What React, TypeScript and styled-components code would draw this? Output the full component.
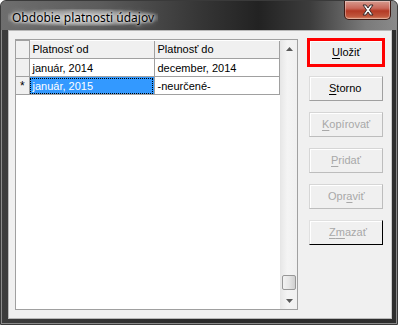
import styled, { createGlobalStyle } from "styled-components";

const GlobalStyle = createGlobalStyle`
  html, body {
    margin: 0;
    padding: 0;
    background: #ffffff;
  }
  * {
    box-sizing: border-box;
  }
`;

const Window = styled.div`
  width: 398px;
  height: 325px;
  display: flex;
  flex-direction: column;
  border: 1px solid #3a3a3a;
  border-radius: 6px 6px 0 0;
  background: linear-gradient(
    90deg,
    #3c3c3c 0%,
    #2a2a2a 50%,
    #2e2e2e 100%
  );
  box-shadow: inset 0 0 0 1px #8a8a8a;
  overflow: hidden;
`;

const TitleBar = styled.div`
  height: 29px;
  flex: none;
  display: flex;
  justify-content: space-between;
  align-items: flex-start;
  padding: 0 6px 0 7px;
  background: linear-gradient(
    90deg,
    #6e6e6e 0%,
    #5c5c5c 25%,
    #363636 50%,
    #222222 65%,
    #3c3c3c 78%,
    #7a7a7a 92%,
    #8a8a8a 100%
  );
`;

const Title = styled.div`
  margin-top: 8px;
  font-family: "Noto Sans", "Open Sans", sans-serif;
  font-size: 12px;
  color: #000;
  padding: 0 4px;
  background: radial-gradient(
    ellipse at center,
    rgba(255, 255, 255, 0.6) 0%,
    rgba(255, 255, 255, 0.35) 55%,
    rgba(255, 255, 255, 0) 80%
  );
  text-shadow: 0 0 6px #fff, 0 0 3px #fff;
`;

const CloseButton = styled.div`
  width: 47px;
  height: 19px;
  display: flex;
  align-items: center;
  justify-content: center;
  border: 1px solid #3d1a14;
  border-top: none;
  border-radius: 0 0 5px 5px;
  background: linear-gradient(
    180deg,
    #d69a8e 0%,
    #c9685a 40%,
    #b43a25 55%,
    #c0563c 85%,
    #d98a6a 100%
  );
  box-shadow: inset 0 0 0 1px rgba(255, 255, 255, 0.35);
`;

const Body = styled.div`
  flex: 1;
  display: flex;
  padding: 0 7px 7px 7px;
`;

const Client = styled.div`
  flex: 1;
  display: flex;
  gap: 11px;
  padding: 8px 8px 8px 6px;
  background: #f0f0f0;
  border: 1px solid #b8b8b8;
  border-right-color: #c8c8c8;
  font-family: "Liberation Sans", Arial, sans-serif;
  font-size: 11px;
  color: #000;
`;

const Grid = styled.div`
  width: 283px;
  height: 271px;
  display: flex;
  border: 1px solid #a0a0a0;
  background: #fff;
`;

const TableArea = styled.div`
  flex: 1;
  background: #fff;
`;

const Table = styled.table`
  border-collapse: collapse;
  font: inherit;
`;

const HeadCell = styled.th<{ $w: number }>`
  width: ${(p) => p.$w}px;
  height: 17px;
  padding: 0 3px;
  text-align: left;
  font-weight: normal;
  background: #f0f0f0;
  border: 1px solid #a0a0a0;
  border-top: none;
  white-space: nowrap;
`;

const RowHead = styled.td`
  width: 13px;
  height: 18px;
  padding: 0;
  text-align: center;
  font-weight: normal;
  background: #f0f0f0;
  border: 1px solid #a0a0a0;
  border-left: none;
  font-size: 12px;
`;

const Cell = styled.td<{ $selected?: boolean }>`
  height: 18px;
  padding: 0 3px;
  border: 1px solid #a0a0a0;
  white-space: nowrap;
  background: ${(p) => (p.$selected ? "#3399ff" : "#fff")};
  color: ${(p) => (p.$selected ? "#fff" : "#000")};
  outline: ${(p) => (p.$selected ? "1px dotted #000" : "none")};
  outline-offset: -2px;
`;

const ScrollBar = styled.div`
  width: 17px;
  flex: none;
  display: flex;
  flex-direction: column;
  border-left: 1px solid #e6e6e6;
  background: linear-gradient(90deg, #e8e8e8 0%, #f4f4f4 40%, #f0f0f0 100%);
`;

const Arrow = styled.div`
  height: 17px;
  display: flex;
  align-items: center;
  justify-content: center;
  flex: none;
`;

const Track = styled.div`
  flex: 1;
  display: flex;
  flex-direction: column;
  justify-content: flex-end;
  padding: 0 1px 2px 1px;
`;

const Thumb = styled.div`
  height: 15px;
  border: 1px solid #979797;
  border-radius: 2px;
  background: linear-gradient(90deg, #f2f2f2 0%, #e6e6e6 50%, #cfcfcf 100%);
`;

const Buttons = styled.div`
  display: flex;
  flex-direction: column;
  gap: 11px;
  padding-top: 1px;
`;

const Button = styled.div<{
  $indent: number;
  $disabled?: boolean;
  $focused?: boolean;
  $raised?: boolean;
}>`
  width: 74px;
  height: 25px;
  display: flex;
  align-items: center;
  padding-left: ${(p) => p.$indent}px;
  background: #f0f0f0;
  color: ${(p) => (p.$disabled ? "#a8a8a8" : "#000")};
  border: 1px solid;
  border-color: ${(p) =>
    p.$focused
      ? "#000"
      : p.$raised
      ? "#e0e0e0 #000 #000 #e0e0e0"
      : p.$disabled
      ? "#d6d6d6 #bdbdbd #bdbdbd #d6d6d6"
      : "#dcdcdc #a0a0a0 #a0a0a0 #dcdcdc"};
  box-shadow: inset 1px 1px 0 #fff;
  outline: ${(p) => (p.$focused ? "3px solid #ff0000" : "none")};
  outline-offset: -1px;
`;

const Label = styled.span`
  font-weight: 400;
  line-height: 13px;
  white-space: nowrap;
  u {
    text-decoration: underline;
    text-underline-offset: 2px;
  }
`;

export default function App() {
  return (
    <>
      <GlobalStyle />
      <Window>
        <TitleBar>
          <Title>Obdobie platnosti údajov</Title>
          <CloseButton>
            <svg width="14" height="12" viewBox="0 0 14 12">
              <path
                d="M2 1 L5 1 L7 4 L9 1 L12 1 L8.5 6 L12 11 L9 11 L7 8 L5 11 L2 11 L5.5 6 Z"
                fill="#f4f4f4"
                stroke="#3a2a2a"
                strokeWidth="1"
                strokeLinejoin="round"
              />
            </svg>
          </CloseButton>
        </TitleBar>
        <Body>
          <Client>
            <Grid>
              <TableArea>
                <Table>
                  <thead>
                    <tr>
                      <RowHead as="th" />
                      <HeadCell $w={125}>Platnosť od</HeadCell>
                      <HeadCell $w={125}>Platnosť do</HeadCell>
                    </tr>
                  </thead>
                  <tbody>
                    <tr>
                      <RowHead />
                      <Cell>január, 2014</Cell>
                      <Cell>december, 2014</Cell>
                    </tr>
                    <tr>
                      <RowHead>*</RowHead>
                      <Cell $selected>január, 2015</Cell>
                      <Cell>-neurčené-</Cell>
                    </tr>
                  </tbody>
                </Table>
              </TableArea>
              <ScrollBar>
                <Arrow>
                  <svg width="7" height="4" viewBox="0 0 7 4">
                    <path d="M3.5 0 L7 4 L0 4 Z" fill="#5a5a5a" />
                  </svg>
                </Arrow>
                <Track>
                  <Thumb />
                </Track>
                <Arrow>
                  <svg width="7" height="4" viewBox="0 0 7 4">
                    <path d="M0 0 L7 0 L3.5 4 Z" fill="#5a5a5a" />
                  </svg>
                </Arrow>
              </ScrollBar>
            </Grid>
            <Buttons>
              <Button $focused $indent={22}>
                <Label>
                  <u>U</u>ložiť
                </Label>
              </Button>
              <Button $indent={19}>
                <Label>
                  <u>S</u>torno
                </Label>
              </Button>
              <Button $disabled $indent={12}>
                <Label>
                  <u>K</u>opírovať
                </Label>
              </Button>
              <Button $disabled $indent={21}>
                <Label>
                  <u>P</u>ridať
                </Label>
              </Button>
              <Button $disabled $indent={18}>
                <Label>
                  Opr<u>a</u>viť
                </Label>
              </Button>
              <Button $disabled $raised $indent={19}>
                <Label>
                  <u>Z</u>
                  <u>m</u>azať
                </Label>
              </Button>
            </Buttons>
          </Client>
        </Body>
      </Window>
    </>
  );
}
